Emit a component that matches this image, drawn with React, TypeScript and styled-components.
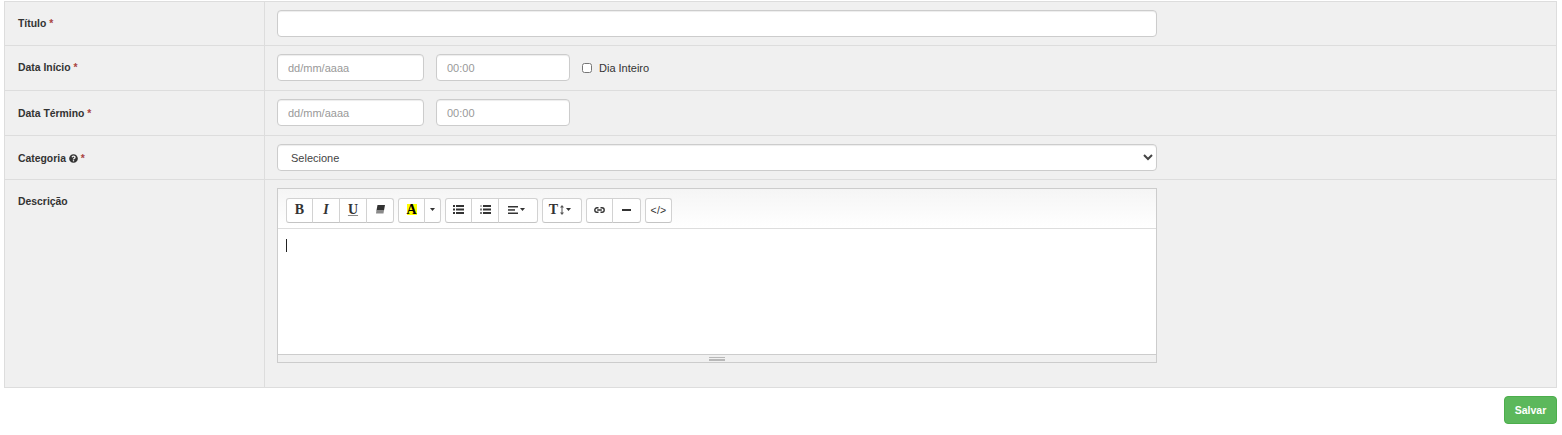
import React from "react";
import styled, { createGlobalStyle } from "styled-components";
import { FaQuestionCircle } from "react-icons/fa";

const GlobalStyle = createGlobalStyle`
  body {
    margin: 0;
    background: #fff;
    font-family: "Liberation Sans", Arial, sans-serif;
    color: #333;
  }
`;

const Page = styled.div`
  padding: 1px 5px 0 4px;
`;

const FormTable = styled.div`
  border: 1px solid #ddd;
  background: #f0f0f0;
`;

const Row = styled.div<{ $height: number }>`
  display: grid;
  grid-template-columns: 260px 1fr;
  height: ${(p) => p.$height}px;
  box-sizing: border-box;
  & + & {
    border-top: 1px solid #ddd;
  }
`;

const Label = styled.div<{ $low?: boolean }>`
  padding: ${(p) => (p.$low ? 17 : 16)}px 13px 0;
  font-size: 10.4px;
  line-height: 12px;
  font-weight: bold;
  color: #333;
  border-right: 1px solid #ddd;
  svg {
    font-size: 9px;
    vertical-align: -1px;
  }
`;

const Required = styled.span`
  color: #a94442;
`;

const Field = styled.div`
  padding: 8px 12px 0;
  display: flex;
  align-items: flex-start;
`;

const baseControl = `
  box-sizing: border-box;
  height: 27px;
  border: 1px solid #ccc;
  border-radius: 4px;
  background: #fff;
  font-family: "Liberation Sans", Arial, sans-serif;
  font-size: 11px;
  color: #444;
  box-shadow: inset 0 1px 1px rgba(0, 0, 0, 0.075);
  outline: none;
`;

const TextInput = styled.input<{ $width: number }>`
  ${baseControl}
  width: ${(p) => p.$width}px;
  padding: 0 10px;
  &::placeholder {
    color: #999;
    opacity: 1;
  }
  & + & {
    margin-left: 12px;
  }
`;

const Select = styled.select`
  ${baseControl}
  width: 880px;
  padding: 0 9px;
`;

const CheckLabel = styled.label`
  display: flex;
  align-items: center;
  height: 27px;
  margin-left: 12px;
  font-size: 11px;
  color: #333;
  input {
    width: 10px;
    height: 10px;
    margin: 0 7px 0 0;
  }
`;

const Editor = styled.div`
  width: 880px;
  height: 175px;
  box-sizing: border-box;
  border: 1px solid #ccc;
  display: flex;
  flex-direction: column;
  background: #fff;
`;

const Toolbar = styled.div`
  height: 40px;
  box-sizing: border-box;
  flex: none;
  display: flex;
  gap: 4px;
  padding: 9px 0 0 8px;
  border-bottom: 1px solid #ddd;
  background: linear-gradient(#f5f5f5, #fff);
`;

const ToolGroup = styled.div`
  display: flex;
  height: 25px;
`;

const ToolButton = styled.button<{ $width?: number; $pushLeft?: boolean }>`
  box-sizing: border-box;
  width: ${(p) => p.$width ?? 27}px;
  height: 25px;
  padding: 0 ${(p) => (p.$pushLeft ? 4 : 0)}px 2px 0;
  margin: 0;
  display: flex;
  align-items: center;
  justify-content: center;
  gap: 2px;
  background: #fff;
  border: 1px solid #d2d2d2;
  border-bottom-color: #c4c4c4;
  color: #333;
  svg {
    flex: none;
  }
  &:not(:first-child) {
    margin-left: -1px;
    width: ${(p) => (p.$width ?? 27) + 1}px;
  }
  &:first-child {
    border-radius: 3px 0 0 3px;
  }
  &:last-child {
    border-radius: 0 3px 3px 0;
  }
  &:first-child:last-child {
    border-radius: 3px;
  }
`;

const SerifGlyph = styled.span<{ $italic?: boolean; $underline?: boolean; $bold?: boolean }>`
  font-family: "Liberation Serif", "Times New Roman", serif;
  font-size: 14px;
  line-height: 15px;
  font-weight: ${(p) => (p.$bold ? "bold" : "normal")};
  font-style: ${(p) => (p.$italic ? "italic" : "normal")};
  text-decoration: ${(p) => (p.$underline ? "underline" : "none")};
  text-decoration-color: #888;
  color: #333;
`;

const HighlightGlyph = styled(SerifGlyph)`
  background: #ff0;
  color: #000;
  font-weight: bold;
  font-size: 14px;
  width: 10px;
  height: 11px;
  line-height: 11px;
  display: flex;
  justify-content: center;
`;

const CodeGlyph = styled.span`
  font-family: "Liberation Sans", Arial, sans-serif;
  font-size: 10.5px;
  letter-spacing: 0.3px;
  color: #333;
`;

const EditArea = styled.div`
  flex: 1;
  padding: 10px 8px;
`;

const Caret = styled.div`
  width: 1px;
  height: 13px;
  background: #222;
`;

const StatusBar = styled.div`
  height: 8px;
  flex: none;
  box-sizing: border-box;
  border-top: 1px solid #ccc;
  background: #f0f0f0;
  display: flex;
  flex-direction: column;
  align-items: center;
  justify-content: center;
  gap: 1px;
`;

const GripLine = styled.div<{ $thick?: boolean }>`
  width: 16px;
  height: ${(p) => (p.$thick ? 2 : 1)}px;
  background: #b8b8b8;
`;

const Footer = styled.div`
  display: flex;
  justify-content: flex-end;
  padding-top: 8px;
`;

const SaveButton = styled.button`
  box-sizing: border-box;
  width: 53px;
  height: 28px;
  padding: 0;
  background: #5cb85c;
  border: 1px solid #4cae4c;
  border-radius: 4px;
  color: #fff;
  font-family: "Liberation Sans", Arial, sans-serif;
  font-size: 10.5px;
  font-weight: bold;
`;

const DropCaret = () => (
  <svg width="5" height="3" viewBox="0 0 5 3">
    <path d="M0 0h5L2.5 3z" fill="#333" />
  </svg>
);

const EraserIcon = () => (
  <svg width="10" height="9" viewBox="0 0 10 9">
    <path d="M2.5 0H10L9 5.5H1.5z" fill="#333" />
    <path d="M1.5 5H9L8.5 8.5H1z" fill="#8a8a8a" />
  </svg>
);

const BulletIcon = () => (
  <svg width="11" height="9" viewBox="0 0 11 9" fill="#333">
    <rect x="0" y="0" width="2" height="2" />
    <rect x="0" y="3.5" width="2" height="2" />
    <rect x="0" y="7" width="2" height="2" />
    <rect x="3" y="0" width="8" height="2" />
    <rect x="3" y="3.5" width="8" height="2" />
    <rect x="3" y="7" width="8" height="2" />
  </svg>
);

const NumberIcon = () => (
  <svg width="11" height="9" viewBox="0 0 11 9" fill="#333">
    <rect x="0.5" y="0" width="1" height="2" fill="#777" />
    <rect x="0" y="3.5" width="2" height="2" fill="#777" />
    <rect x="0" y="7" width="2" height="2" fill="#777" />
    <rect x="3" y="0" width="8" height="2" />
    <rect x="3" y="3.5" width="8" height="2" />
    <rect x="3" y="7" width="8" height="2" />
  </svg>
);

const AlignIcon = () => (
  <svg width="10" height="8" viewBox="0 0 10 8" fill="#333">
    <rect width="10" height="1.5" />
    <rect y="3.2" width="7" height="1.5" />
    <rect y="6.5" width="10" height="1.5" />
  </svg>
);

const HeightIcon = () => (
  <svg width="4" height="10" viewBox="0 0 4 10" fill="#555">
    <path d="M2 0l2 2.5H2.5v5H4L2 10 0 7.5h1.5v-5H0z" />
  </svg>
);

const LinkIcon = () => (
  <svg width="11" height="6" viewBox="0 0 11 6" fill="none" stroke="#333" strokeWidth="1.4">
    <path d="M4.5 .8H3a2.2 2.2 0 0 0 0 4.4h1.5M6.5 .8H8a2.2 2.2 0 0 1 0 4.4H6.5M3.2 3h4.6" />
  </svg>
);

const RuleIcon = () => (
  <svg width="9" height="2" viewBox="0 0 9 2">
    <rect width="9" height="2" fill="#333" />
  </svg>
);

const App = () => {
  return (
    <Page>
      <GlobalStyle />
      <FormTable>
        <Row $height={43}>
          <Label>
            Título <Required>*</Required>
          </Label>
          <Field>
            <TextInput type="text" $width={880} />
          </Field>
        </Row>
        <Row $height={45}>
          <Label>
            Data Início <Required>*</Required>
          </Label>
          <Field>
            <TextInput type="text" placeholder="dd/mm/aaaa" $width={147} />
            <TextInput type="text" placeholder="00:00" $width={134} />
            <CheckLabel>
              <input type="checkbox" />
              Dia Inteiro
            </CheckLabel>
          </Field>
        </Row>
        <Row $height={45}>
          <Label $low>
            Data Término <Required>*</Required>
          </Label>
          <Field>
            <TextInput type="text" placeholder="dd/mm/aaaa" $width={147} />
            <TextInput type="text" placeholder="00:00" $width={134} />
          </Field>
        </Row>
        <Row $height={44}>
          <Label $low>
            Categoria <FaQuestionCircle /> <Required>*</Required>
          </Label>
          <Field>
            <Select defaultValue="">
              <option value="">Selecione</option>
            </Select>
          </Field>
        </Row>
        <Row $height={208}>
          <Label>Descrição</Label>
          <Field>
            <Editor>
              <Toolbar>
                <ToolGroup>
                  <ToolButton>
                    <SerifGlyph $bold>B</SerifGlyph>
                  </ToolButton>
                  <ToolButton>
                    <SerifGlyph $italic $bold>I</SerifGlyph>
                  </ToolButton>
                  <ToolButton>
                    <SerifGlyph $underline $bold>U</SerifGlyph>
                  </ToolButton>
                  <ToolButton>
                    <EraserIcon />
                  </ToolButton>
                </ToolGroup>
                <ToolGroup>
                  <ToolButton>
                    <HighlightGlyph>A</HighlightGlyph>
                  </ToolButton>
                  <ToolButton $width={16}>
                    <DropCaret />
                  </ToolButton>
                </ToolGroup>
                <ToolGroup>
                  <ToolButton>
                    <BulletIcon />
                  </ToolButton>
                  <ToolButton>
                    <NumberIcon />
                  </ToolButton>
                  <ToolButton $width={39} $pushLeft>
                    <AlignIcon />
                    <DropCaret />
                  </ToolButton>
                </ToolGroup>
                <ToolGroup>
                  <ToolButton $width={40} $pushLeft>
                    <SerifGlyph $bold>T</SerifGlyph>
                    <HeightIcon />
                    <DropCaret />
                  </ToolButton>
                </ToolGroup>
                <ToolGroup>
                  <ToolButton>
                    <LinkIcon />
                  </ToolButton>
                  <ToolButton $width={28}>
                    <RuleIcon />
                  </ToolButton>
                </ToolGroup>
                <ToolGroup>
                  <ToolButton>
                    <CodeGlyph>&lt;/&gt;</CodeGlyph>
                  </ToolButton>
                </ToolGroup>
              </Toolbar>
              <EditArea>
                <Caret />
              </EditArea>
              <StatusBar>
                <GripLine />
                <GripLine $thick />
              </StatusBar>
            </Editor>
          </Field>
        </Row>
      </FormTable>
      <Footer>
        <SaveButton>Salvar</SaveButton>
      </Footer>
    </Page>
  );
};

export default App;
